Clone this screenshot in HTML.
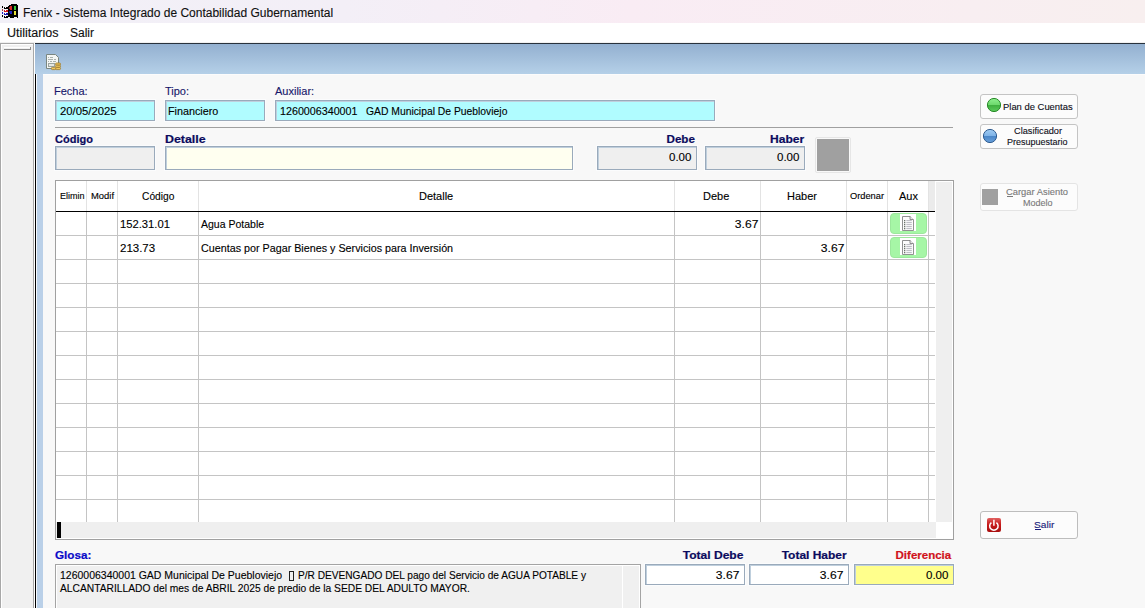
<!DOCTYPE html>
<html><head><meta charset="utf-8">
<style>
*{box-sizing:border-box;margin:0;padding:0}
html,body{width:1145px;height:608px;overflow:hidden;background:#f8f8f8;font-family:"Liberation Sans",sans-serif;font-size:11px;color:#000}
.a{position:absolute}
.t{position:absolute;white-space:pre;line-height:1}
.box{position:absolute;border:1px solid #9aaabb;box-shadow:inset 1px 1px 0 #bfcfdd,0 0 0 1px #fbfcfd}
.btn{position:absolute;border:1px solid #c4c4c4;border-radius:3px;background:#fcfcfc}
</style></head><body>

<div class="a" style="left:0px;top:0px;width:1145px;height:23px;background:linear-gradient(90deg,#f2f0f7 0%,#f3eff7 30%,#f9ecf4 55%,#f8eef1 85%,#f8efef 100%)"></div>
<div class="a" style="left:0px;top:23px;width:1145px;height:20px;background:#fff"></div>
<div class="a" style="left:0px;top:42px;width:1145px;height:1px;background:#f0f0f0"></div>
<svg class="a" style="left:0;top:0" width="24" height="24" viewBox="0 0 24 24" shape-rendering="crispEdges">
<path d="M8 6h1v-1h2v-1h6v1h1v13h-1v-1h-3v1h-4v-1h-2z" fill="#000"/>
<rect x="10" y="6" width="2" height="4" fill="#d82828"/>
<rect x="9" y="7" width="1" height="2" fill="#a02020"/>
<rect x="14" y="6" width="2" height="4" fill="#38c838"/>
<rect x="10" y="11" width="2" height="3" fill="#2424c8"/>
<rect x="9" y="11" width="1" height="2" fill="#1a1a90"/>
<rect x="14" y="11" width="2" height="4" fill="#e8e038"/>
<rect x="2" y="6" width="1" height="2" fill="#000"/>
<rect x="2" y="9" width="1" height="2" fill="#a04040"/>
<rect x="2" y="12" width="1" height="2" fill="#2020c0"/>
<rect x="2" y="15" width="1" height="2" fill="#000"/>
<rect x="4" y="7" width="4" height="2" fill="#000"/>
<rect x="4" y="10" width="4" height="2" fill="#d01818"/>
<rect x="4" y="13" width="4" height="2" fill="#1818b0"/>
<rect x="4" y="16" width="4" height="2" fill="#000"/>
<rect x="5" y="7" width="1" height="1" fill="#fff"/><rect x="5" y="10" width="1" height="1" fill="#fff"/><rect x="5" y="13" width="1" height="1" fill="#fff"/><rect x="5" y="16" width="1" height="1" fill="#fff"/>
</svg>
<div class="t" style="left:23px;top:7px;font-size:12px;font-weight:400;color:#101010;-webkit-text-stroke:0.12px currentColor;">Fenix - Sistema Integrado de Contabilidad Gubernamental</div>
<div class="t" style="left:7px;top:27px;font-size:12px;font-weight:400;color:#101010;transform:scaleX(1.043);transform-origin:left top;-webkit-text-stroke:0.12px currentColor;">Utilitarios</div>
<div class="t" style="left:70px;top:27px;font-size:12px;font-weight:400;color:#101010;-webkit-text-stroke:0.12px currentColor;">Salir</div>
<div class="a" style="left:0px;top:43px;width:34px;height:565px;background:#f0f0f0;border:1px solid #a8a8a8;border-bottom:none;box-shadow:inset 1px 1px 0 #fff"></div>
<div class="a" style="left:4px;top:47px;width:27px;height:1px;background:#fff"></div>
<div class="a" style="left:4px;top:49px;width:27px;height:1px;background:#8c8c8c"></div>
<div class="a" style="left:30px;top:47px;width:1px;height:3px;background:#8c8c8c"></div>
<div class="a" style="left:34px;top:43px;width:1px;height:565px;background:#fff"></div>
<div class="a" style="left:35px;top:43px;width:1110px;height:31px;border-top:1px solid #28323c;background:linear-gradient(#93b0d0,#b5d0e8)"></div>
<div class="a" style="left:35px;top:74px;width:1px;height:534px;background:#000"></div>
<div class="a" style="left:36px;top:74px;width:1px;height:534px;background:#f4f8fc"></div>
<div class="a" style="left:37px;top:74px;width:6px;height:534px;background:#bad0e8"></div>
<div class="a" style="left:43px;top:74px;width:1102px;height:534px;background:#f8f8f8;border-top:1px solid #fcfcfc"></div>
<svg class="a" style="left:42px;top:50px" width="22" height="22" viewBox="0 0 22 22">
<path d="M4.5 4.5h9l3 3v11h-12z" fill="#f4f6f4" stroke="#7a8680" stroke-width="1"/>
<path d="M6 7.5h1M8 7.5h3M6 9.5h5M12 9.5h2M6 11.5h1M8 11.5h2M11 11.5h3" stroke="#aab2ae" stroke-width="1"/>
<rect x="6.5" y="13.5" width="6" height="3" fill="#e6e8e4" stroke="#9aa4a0"/>
<g fill="#f0c860" stroke="#a07a28" stroke-width="0.8">
<rect x="13.5" y="13" width="5" height="2.2" rx="1"/>
<rect x="13.5" y="15.2" width="5" height="2.2" rx="1"/>
<rect x="13.5" y="17.4" width="5" height="2.2" rx="1"/>
<rect x="9.3" y="17.4" width="4.5" height="2.2" rx="1"/>
</g>
</svg>
<div class="t" style="left:54px;top:86px;font-size:11px;font-weight:400;color:#17176a;-webkit-text-stroke:0.12px currentColor;">Fecha:</div>
<div class="t" style="left:165px;top:86px;font-size:11px;font-weight:400;color:#17176a;-webkit-text-stroke:0.12px currentColor;">Tipo:</div>
<div class="t" style="left:275px;top:86px;font-size:11px;font-weight:400;color:#17176a;-webkit-text-stroke:0.12px currentColor;">Auxiliar:</div>
<div class="box" style="left:55px;top:100px;width:100px;height:21px;background:#b0fcff"></div>
<div class="box" style="left:165px;top:100px;width:100px;height:21px;background:#b0fcff"></div>
<div class="box" style="left:275px;top:100px;width:440px;height:21px;background:#b0fcff"></div>
<div class="t" style="left:60px;top:106px;font-size:11px;font-weight:400;color:#000;transform:scaleX(1.027);transform-origin:left top;-webkit-text-stroke:0.12px currentColor;">20/05/2025</div>
<div class="t" style="left:168px;top:106px;font-size:11px;font-weight:400;color:#000;transform:scaleX(0.980);transform-origin:left top;-webkit-text-stroke:0.12px currentColor;">Financiero</div>
<div class="t" style="left:280px;top:106px;font-size:11px;font-weight:400;color:#000;transform:scaleX(0.974);transform-origin:left top;-webkit-text-stroke:0.12px currentColor;">1260006340001</div>
<div class="t" style="left:366px;top:106px;font-size:11px;font-weight:400;color:#000;transform:scaleX(0.940);transform-origin:left top;-webkit-text-stroke:0.12px currentColor;">GAD Municipal De Puebloviejo</div>
<div class="a" style="left:55px;top:127px;width:898px;height:1px;background:#a0a0a0"></div>
<div class="t" style="left:55px;top:134px;font-size:11px;font-weight:700;color:#0b0b5e;-webkit-text-stroke:0.2px currentColor;">Código</div>
<div class="t" style="left:165px;top:134px;font-size:11px;font-weight:700;color:#0b0b5e;transform:scaleX(1.125);transform-origin:left top;-webkit-text-stroke:0.2px currentColor;">Detalle</div>
<div class="box" style="left:55px;top:146px;width:100px;height:24px;background:#efefef"></div>
<div class="box" style="left:165px;top:146px;width:408px;height:24px;background:#fffff0"></div>
<div class="t" style="right:450px;top:134px;font-size:11px;font-weight:700;color:#0b0b5e;transform:scaleX(1.056);transform-origin:right top;-webkit-text-stroke:0.2px currentColor;">Debe</div>
<div class="t" style="right:341px;top:134px;font-size:11px;font-weight:700;color:#0b0b5e;transform:scaleX(1.097);transform-origin:right top;-webkit-text-stroke:0.2px currentColor;">Haber</div>
<div class="box" style="left:597px;top:146px;width:100px;height:24px;background:#efefef"></div>
<div class="box" style="left:705px;top:146px;width:100px;height:24px;background:#efefef"></div>
<div class="t" style="right:454px;top:152px;font-size:11px;font-weight:400;color:#000;transform:scaleX(1.048);transform-origin:right top;-webkit-text-stroke:0.12px currentColor;">0.00</div>
<div class="t" style="right:346px;top:152px;font-size:11px;font-weight:400;color:#000;transform:scaleX(1.048);transform-origin:right top;-webkit-text-stroke:0.12px currentColor;">0.00</div>
<div class="a" style="left:815px;top:137px;width:36px;height:36px;border:1px solid #e6e6e6;border-radius:2px;background:#f9f9f9"></div>
<div class="a" style="left:817px;top:139px;width:32px;height:32px;background:#a0a0a0"></div>
<div class="a" style="left:55px;top:180px;width:899px;height:360px;border:1px solid #a0a0a0;background:#fff"></div>
<div class="a" style="left:928px;top:181px;width:7px;height:30px;background:#ebebeb"></div>
<div class="a" style="left:936px;top:182px;width:16px;height:340px;background:#efefef"></div>
<div class="a" style="left:56px;top:522px;width:880px;height:16px;background:#efefef"></div>
<div class="a" style="left:57px;top:522px;width:4px;height:16px;background:#000"></div>
<div class="a" style="left:56px;top:211px;width:879px;height:1px;background:#000"></div>
<div class="a" style="left:86px;top:181px;width:1px;height:30px;background:#e3e3e3"></div>
<div class="a" style="left:86px;top:212px;width:1px;height:310px;background:#c4c4c4"></div>
<div class="a" style="left:117px;top:181px;width:1px;height:30px;background:#e3e3e3"></div>
<div class="a" style="left:117px;top:212px;width:1px;height:310px;background:#c4c4c4"></div>
<div class="a" style="left:198px;top:181px;width:1px;height:30px;background:#e3e3e3"></div>
<div class="a" style="left:198px;top:212px;width:1px;height:310px;background:#c4c4c4"></div>
<div class="a" style="left:674px;top:181px;width:1px;height:30px;background:#e3e3e3"></div>
<div class="a" style="left:674px;top:212px;width:1px;height:310px;background:#c4c4c4"></div>
<div class="a" style="left:760px;top:181px;width:1px;height:30px;background:#e3e3e3"></div>
<div class="a" style="left:760px;top:212px;width:1px;height:310px;background:#c4c4c4"></div>
<div class="a" style="left:846px;top:181px;width:1px;height:30px;background:#e3e3e3"></div>
<div class="a" style="left:846px;top:212px;width:1px;height:310px;background:#c4c4c4"></div>
<div class="a" style="left:887px;top:181px;width:1px;height:30px;background:#e3e3e3"></div>
<div class="a" style="left:887px;top:212px;width:1px;height:310px;background:#c4c4c4"></div>
<div class="a" style="left:928px;top:181px;width:1px;height:30px;background:#e3e3e3"></div>
<div class="a" style="left:928px;top:212px;width:1px;height:310px;background:#c4c4c4"></div>
<div class="a" style="left:56px;top:235px;width:879px;height:1px;background:#c4c4c4"></div>
<div class="a" style="left:56px;top:259px;width:879px;height:1px;background:#c4c4c4"></div>
<div class="a" style="left:56px;top:283px;width:879px;height:1px;background:#c4c4c4"></div>
<div class="a" style="left:56px;top:307px;width:879px;height:1px;background:#c4c4c4"></div>
<div class="a" style="left:56px;top:331px;width:879px;height:1px;background:#c4c4c4"></div>
<div class="a" style="left:56px;top:355px;width:879px;height:1px;background:#c4c4c4"></div>
<div class="a" style="left:56px;top:379px;width:879px;height:1px;background:#c4c4c4"></div>
<div class="a" style="left:56px;top:403px;width:879px;height:1px;background:#c4c4c4"></div>
<div class="a" style="left:56px;top:427px;width:879px;height:1px;background:#c4c4c4"></div>
<div class="a" style="left:56px;top:451px;width:879px;height:1px;background:#c4c4c4"></div>
<div class="a" style="left:56px;top:475px;width:879px;height:1px;background:#c4c4c4"></div>
<div class="a" style="left:56px;top:499px;width:879px;height:1px;background:#c4c4c4"></div>
<div class="t" style="left:60px;top:192px;font-size:9px;font-weight:400;color:#000;-webkit-text-stroke:0.12px currentColor;">Elimin</div>
<div class="t" style="left:91px;top:192px;font-size:9px;font-weight:400;color:#000;transform:scaleX(1.045);transform-origin:left top;-webkit-text-stroke:0.12px currentColor;">Modif</div>
<div class="t" style="left:142px;top:191px;font-size:11px;font-weight:400;color:#000;transform:scaleX(0.929);transform-origin:left top;-webkit-text-stroke:0.12px currentColor;">Código</div>
<div class="t" style="left:419px;top:191px;font-size:11px;font-weight:400;color:#000;-webkit-text-stroke:0.12px currentColor;">Detalle</div>
<div class="t" style="left:703px;top:191px;font-size:11px;font-weight:400;color:#000;-webkit-text-stroke:0.12px currentColor;">Debe</div>
<div class="t" style="left:787px;top:191px;font-size:11px;font-weight:400;color:#000;-webkit-text-stroke:0.12px currentColor;">Haber</div>
<div class="t" style="left:850px;top:192px;font-size:9px;font-weight:400;color:#000;transform:scaleX(1.030);transform-origin:left top;-webkit-text-stroke:0.12px currentColor;">Ordenar</div>
<div class="t" style="left:899px;top:191px;font-size:11px;font-weight:400;color:#000;-webkit-text-stroke:0.12px currentColor;">Aux</div>
<div class="t" style="left:120px;top:219px;font-size:11px;font-weight:400;color:#000;transform:scaleX(1.021);transform-origin:left top;-webkit-text-stroke:0.12px currentColor;">152.31.01</div>
<div class="t" style="left:201px;top:219px;font-size:11px;font-weight:400;color:#000;transform:scaleX(0.955);transform-origin:left top;-webkit-text-stroke:0.12px currentColor;">Agua Potable</div>
<div class="t" style="right:387px;top:219px;font-size:11px;font-weight:400;color:#000;transform:scaleX(1.100);transform-origin:right top;-webkit-text-stroke:0.12px currentColor;">3.67</div>
<div class="t" style="left:120px;top:243px;font-size:11px;font-weight:400;color:#000;transform:scaleX(1.045);transform-origin:left top;-webkit-text-stroke:0.12px currentColor;">213.73</div>
<div class="t" style="left:201px;top:243px;font-size:11px;font-weight:400;color:#000;transform:scaleX(0.977);transform-origin:left top;-webkit-text-stroke:0.12px currentColor;">Cuentas por Pagar Bienes y Servicios para Inversión</div>
<div class="t" style="right:301px;top:243px;font-size:11px;font-weight:400;color:#000;transform:scaleX(1.100);transform-origin:right top;-webkit-text-stroke:0.12px currentColor;">3.67</div>
<div class="a" style="left:890px;top:213px;width:37px;height:21px;border-radius:4px;background:#a6f6a6;border:1px solid #9ce89c"></div>
<svg class="a" style="left:900px;top:214px" width="16" height="17" viewBox="0 0 16 17">
<rect x="0" y="0" width="16" height="17" fill="#fff"/>
<path d="M2.5 2.5h7.5l3.5 3.5v10.5h-11z" fill="#fcfcfc" stroke="#858585" stroke-width="0.9"/>
<path d="M10 2v3.5h3.5" fill="#e8e8e8" stroke="#858585" stroke-width="0.9"/>
<g fill="#6a726a"><rect x="4" y="6" width="1.3" height="1.3"/><rect x="4" y="8" width="1.3" height="1.3"/><rect x="4" y="10" width="1.3" height="1.3"/><rect x="4" y="12" width="1.3" height="1.3"/><rect x="4" y="14" width="1.3" height="1.3"/></g>
<g fill="#b0b0b8"><rect x="6.3" y="6.2" width="5.5" height="0.9"/><rect x="6.3" y="8.2" width="5.5" height="0.9"/><rect x="6.3" y="10.2" width="5.5" height="0.9"/><rect x="6.3" y="12.2" width="5.5" height="0.9"/><rect x="6.3" y="14.2" width="5.5" height="0.9"/></g>
</svg>
<div class="a" style="left:890px;top:237px;width:37px;height:21px;border-radius:4px;background:#a6f6a6;border:1px solid #9ce89c"></div>
<svg class="a" style="left:900px;top:238px" width="16" height="17" viewBox="0 0 16 17">
<rect x="0" y="0" width="16" height="17" fill="#fff"/>
<path d="M2.5 2.5h7.5l3.5 3.5v10.5h-11z" fill="#fcfcfc" stroke="#858585" stroke-width="0.9"/>
<path d="M10 2v3.5h3.5" fill="#e8e8e8" stroke="#858585" stroke-width="0.9"/>
<g fill="#6a726a"><rect x="4" y="6" width="1.3" height="1.3"/><rect x="4" y="8" width="1.3" height="1.3"/><rect x="4" y="10" width="1.3" height="1.3"/><rect x="4" y="12" width="1.3" height="1.3"/><rect x="4" y="14" width="1.3" height="1.3"/></g>
<g fill="#b0b0b8"><rect x="6.3" y="6.2" width="5.5" height="0.9"/><rect x="6.3" y="8.2" width="5.5" height="0.9"/><rect x="6.3" y="10.2" width="5.5" height="0.9"/><rect x="6.3" y="12.2" width="5.5" height="0.9"/><rect x="6.3" y="14.2" width="5.5" height="0.9"/></g>
</svg>
<div class="btn" style="left:980px;top:94px;width:98px;height:25px"></div>
<svg class="a" style="left:986px;top:97px" width="16" height="16" viewBox="0 0 16 16">
<defs><linearGradient id="gg" x1="0" y1="0" x2="0" y2="1"><stop offset="0" stop-color="#8ef08e"/><stop offset="0.5" stop-color="#6cd86c"/><stop offset="0.52" stop-color="#3faf3f"/><stop offset="1" stop-color="#5ccc5c"/></linearGradient></defs>
<circle cx="8" cy="8" r="6.6" fill="url(#gg)" stroke="#2a8a2a" stroke-width="1"/>
</svg>
<div class="t" style="left:1003px;top:103px;font-size:9px;font-weight:400;color:#101020;transform:scaleX(1.047);transform-origin:left top;-webkit-text-stroke:0.12px currentColor;">Plan de Cuentas</div>
<div class="btn" style="left:980px;top:124px;width:98px;height:25px"></div>
<svg class="a" style="left:982px;top:128px" width="16" height="16" viewBox="0 0 16 16">
<defs><linearGradient id="bg" x1="0" y1="0" x2="0" y2="1"><stop offset="0" stop-color="#a0ccf4"/><stop offset="0.5" stop-color="#7eb2e6"/><stop offset="0.52" stop-color="#4a86c8"/><stop offset="1" stop-color="#6aa2dc"/></linearGradient></defs>
<circle cx="8" cy="8" r="6.6" fill="url(#bg)" stroke="#305c90" stroke-width="1"/>
</svg>
<div class="t" style="left:1014px;top:127px;font-size:9px;font-weight:400;color:#101020;transform:scaleX(1.022);transform-origin:left top;-webkit-text-stroke:0.12px currentColor;">Clasificador</div>
<div class="t" style="left:1007px;top:138px;font-size:9px;font-weight:400;color:#101020;-webkit-text-stroke:0.12px currentColor;">Presupuestario</div>
<div class="btn" style="left:980px;top:183px;width:98px;height:28px;border-color:#e4e4e4"></div>
<div class="a" style="left:982px;top:189px;width:16px;height:16px;background:#a0a0a0"></div>
<div class="t" style="left:1006px;top:188px;font-size:9px;font-weight:400;color:#7a7a7a;transform:scaleX(1.042);transform-origin:left top;-webkit-text-stroke:0.12px currentColor;">Cargar Asiento</div>
<div class="a" style="left:1007px;top:196px;width:6px;height:1px;background:#7a7a7a"></div>
<div class="t" style="left:1023px;top:199px;font-size:9px;font-weight:400;color:#7a7a7a;-webkit-text-stroke:0.12px currentColor;">Modelo</div>
<div class="btn" style="left:980px;top:511px;width:98px;height:28px;border-color:#bdbdbd"></div>
<svg class="a" style="left:987px;top:518px" width="14" height="14" viewBox="0 0 14 14">
<defs><linearGradient id="rg" x1="0" y1="0" x2="0" y2="1"><stop offset="0" stop-color="#e06060"/><stop offset="0.45" stop-color="#c81c1c"/><stop offset="1" stop-color="#a80e0e"/></linearGradient></defs>
<rect x="0" y="0" width="14" height="14" rx="2" fill="url(#rg)"/>
<path d="M4.4 4.6A4.2 4.2 0 1 0 9.4 4.6" fill="none" stroke="#fff" stroke-width="1.5"/>
<path d="M6.9 1.8v6" stroke="#fff" stroke-width="1.5"/>
</svg>
<div class="t" style="left:1034px;top:521px;font-size:9px;font-weight:400;color:#1a1a7a;transform:scaleX(1.125);transform-origin:left top;-webkit-text-stroke:0.12px currentColor;">Salir</div>
<div class="a" style="left:1035px;top:529px;width:6px;height:1px;background:#1a1a7a"></div>
<div class="t" style="left:55px;top:550px;font-size:11px;font-weight:700;color:#0a0ac8;transform:scaleX(1.062);transform-origin:left top;-webkit-text-stroke:0.2px currentColor;">Glosa:</div>
<div class="t" style="right:402px;top:550px;font-size:11px;font-weight:700;color:#0b0b5e;transform:scaleX(1.095);transform-origin:right top;-webkit-text-stroke:0.2px currentColor;">Total Debe</div>
<div class="t" style="right:298px;top:550px;font-size:11px;font-weight:700;color:#0b0b5e;transform:scaleX(1.090);transform-origin:right top;-webkit-text-stroke:0.2px currentColor;">Total Haber</div>
<div class="t" style="right:194px;top:550px;font-size:11px;font-weight:700;color:#d0121c;transform:scaleX(1.046);transform-origin:right top;-webkit-text-stroke:0.2px currentColor;">Diferencia</div>
<div class="a" style="left:55px;top:564px;width:586px;height:50px;border:1px solid #a4a4a4;background:#f0f0f0;box-shadow:inset 1px 1px 0 #fff,inset -1px 0 0 #fff"></div>
<div class="a" style="left:622px;top:565px;width:1px;height:43px;background:#fff"></div>
<div class="t" style="left:60px;top:570px;font-size:11px;font-weight:400;color:#000;transform:scaleX(0.953);transform-origin:left top;-webkit-text-stroke:0.12px currentColor;">1260006340001 GAD Municipal De Puebloviejo</div>
<div class="a" style="left:289px;top:571px;width:5px;height:10px;border:1px solid #202020"></div>
<div class="t" style="left:298px;top:570px;font-size:11px;font-weight:400;color:#000;transform:scaleX(0.920);transform-origin:left top;-webkit-text-stroke:0.12px currentColor;">P/R DEVENGADO DEL pago del Servicio de AGUA POTABLE y</div>
<div class="t" style="left:60px;top:583px;font-size:11px;font-weight:400;color:#000;transform:scaleX(0.932);transform-origin:left top;-webkit-text-stroke:0.12px currentColor;">ALCANTARILLADO del mes de ABRIL 2025 de predio de la SEDE DEL ADULTO MAYOR.</div>
<div class="box" style="left:645px;top:564px;width:100px;height:21px;background:#fff"></div>
<div class="box" style="left:749px;top:564px;width:100px;height:21px;background:#fff"></div>
<div class="box" style="left:854px;top:564px;width:100px;height:21px;background:#ffff8c"></div>
<div class="t" style="right:406px;top:570px;font-size:11px;font-weight:400;color:#000;transform:scaleX(1.100);transform-origin:right top;-webkit-text-stroke:0.12px currentColor;">3.67</div>
<div class="t" style="right:302px;top:570px;font-size:11px;font-weight:400;color:#000;transform:scaleX(1.100);transform-origin:right top;-webkit-text-stroke:0.12px currentColor;">3.67</div>
<div class="t" style="right:197px;top:570px;font-size:11px;font-weight:400;color:#000;transform:scaleX(1.048);transform-origin:right top;-webkit-text-stroke:0.12px currentColor;">0.00</div>
</body></html>
